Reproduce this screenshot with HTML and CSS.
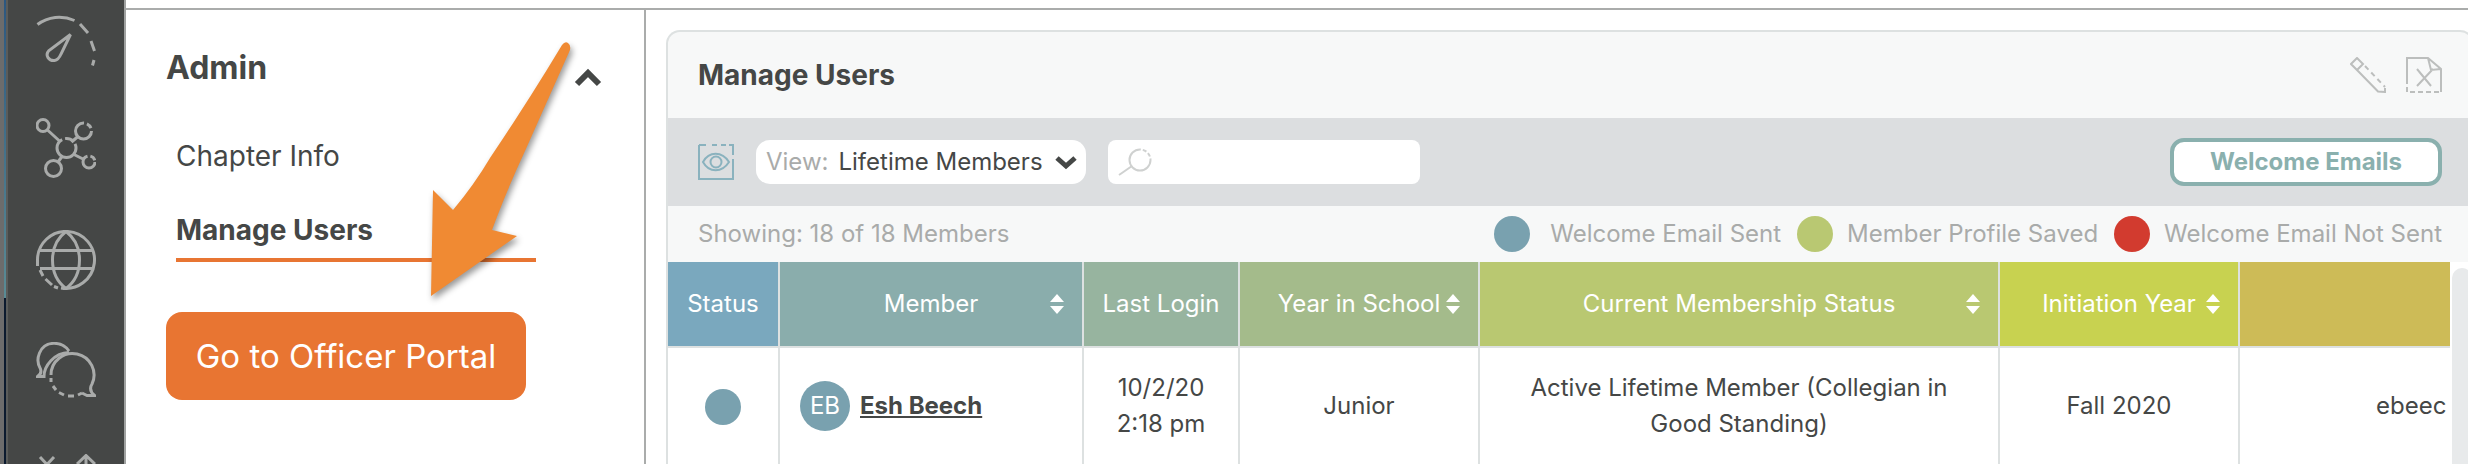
FILE: index.html
```html
<!DOCTYPE html>
<html lang="en">
<head>
    <meta charset="UTF-8">
    <meta name="viewport" content="width=device-width, initial-scale=1.0">
    <title>Manage Users</title>
    <link rel="stylesheet" href="styles.css">
</head>
<body>
    <div class="window-edge"></div>

    <!-- Icon bar -->
    <nav class="icon-bar" aria-label="Main">
        <a href="#" aria-label="Dashboard">
            <svg viewBox="0 0 60 60">
                <path d="M1.500 18.500C12 10.500 26 9 38.500 14.500"/>
                <path d="M44 18L52 27M55 35L58.500 45M58 54L56.500 59.500"/>
                <path d="M34.500 28.500L13 44.500C8.500 49.500 13 55 18.500 54.500C22 54 23.500 51.500 25 48Z"/>
            </svg>
        </a>
        <a href="#" aria-label="Network">
            <svg viewBox="0 0 60 60">
                <circle cx="7" cy="7.500" r="6"/>
                <circle cx="30.500" cy="30" r="9.500" stroke-dasharray="40 3 9 3"/>
                <circle cx="47.500" cy="13" r="8" stroke-dasharray="38 3 6 3"/>
                <circle cx="17.500" cy="50.500" r="8"/>
                <circle cx="53" cy="44" r="6" stroke-dasharray="26 3 6 3"/>
                <path d="M11.500 12L23.500 23M35.500 24L42 18.500M26 38.500L22 44M38 36.500L48 41.500"/>
            </svg>
        </a>
        <a href="#" aria-label="Website">
            <svg viewBox="0 0 60 60">
                <path d="M1.500 30A28.500 28.500 0 1 1 25 58"/>
                <path d="M1.500 30V36M4 40L7 46M9.500 49L16 55M18 56.500L22 58"/>
                <path d="M30 1.500C12 15 12 45 30 58.500C48 45 48 15 30 1.500ZM4 20.500H56M4 38.500H56"/>
            </svg>
        </a>
        <a href="#" aria-label="Messages">
            <svg viewBox="0 0 60 60">
                <path d="M33 9C26-1 9-2 3.500 11C1 17 2 23 4.500 27C5.500 30 4 33 1.500 34.500H8C8 24 18 11 33 10.500"/>
                <path d="M15 33A21.500 21.500 0 1 1 56 42C53.500 46 54.500 50 58.500 53.500H51L46 51"/>
                <path d="M15 36V40M17 44L20 48M23 50.500L28 53M32 54H38M42 53L46 51"/>
            </svg>
        </a>
        <a href="#" aria-label="Transfers">
            <svg viewBox="0 0 60 60">
                <path d="M4 3L18 18M18 3L4 18M50 1.500V30M41 10L50 1.500L59 10"/>
            </svg>
        </a>
    </nav>

    <div class="page">
        <!-- Admin menu -->
        <aside class="side-menu">
            <div class="menu-title">
                <h2>Admin</h2>
                <button class="collapse" type="button" aria-label="Collapse menu">
                    <svg viewBox="0 0 28 20"><path d="M3 16L14 5L25 16"/></svg>
                </button>
            </div>
            <ul>
                <li><a href="#">Chapter Info</a></li>
                <li><a class="active" href="#">Manage Users</a></li>
            </ul>
            <a class="portal-button" href="#">Go to Officer Portal</a>
            <svg class="arrow" viewBox="0 0 140 256" aria-hidden="true">
                <path d="M132 5Q135 1 138 3Q141 5 140 10L95 111Q76 152 62 190L87 196L1 256L3 150L23 170Q44 145 60 118Q99 60 132 5Z"/>
            </svg>
        </aside>

        <!-- Users -->
        <main>
            <section class="card">
                <header class="card-header">
                    <h1>Manage Users</h1>
                    <div class="actions">
                        <button type="button" aria-label="Edit">
                            <svg viewBox="0 0 36 36">
                                <path d="M1 7L7 1L13 7L7 13ZM7 13L28 34.500L35 35V31"/>
                                <path d="M15 9L35 30" stroke-dasharray="5 4"/>
                            </svg>
                        </button>
                        <button type="button" aria-label="Export to Excel">
                            <svg viewBox="0 0 36 36">
                                <path d="M1 27V1H22L35 12V35M22 1L25 13L35 12M11 12L25 29M27 12L11 29"/>
                                <path d="M1 30V35H35" stroke-dasharray="5 3"/>
                            </svg>
                        </button>
                    </div>
                </header>

                <div class="toolbar">
                    <button class="view-button" type="button" aria-label="Show columns">
                        <svg viewBox="0 0 36 36">
                            <path d="M1 1V35H35V15M35 11V2M1 1H8M14 1H19M23 1H28M31 1H36"/>
                            <path d="M5 18C11 7 24 7 31 18C24 29 11 29 5 18Z"/>
                            <circle cx="18" cy="18" r="5.500"/>
                        </svg>
                    </button>
                    <div class="view-select">
                        <label for="view">View:</label>
                        <select id="view">
                            <option>Lifetime Members</option>
                        </select>
                        <svg viewBox="0 0 24 16"><path d="M3 4L12 12L21 4"/></svg>
                    </div>
                    <div class="search">
                        <svg viewBox="0 0 34 28">
                            <circle cx="22" cy="12" r="10.500" stroke-dasharray="50 2 4 2 4 2"/>
                            <path d="M14 18L1 27"/>
                        </svg>
                        <input type="search" aria-label="Search members">
                    </div>
                    <button class="welcome" type="button">Welcome Emails</button>
                </div>

                <div class="summary">
                    <span>Showing: 18 of 18 Members</span>
                    <ul class="legend">
                        <li class="sent"><i class="dot"></i>Welcome Email Sent</li>
                        <li><i class="dot saved"></i>Member Profile Saved</li>
                        <li><i class="dot not-sent"></i>Welcome Email Not Sent</li>
                    </ul>
                </div>

                <div class="table-area">
                    <div class="table-scroll">
                        <table>
                            <colgroup>
                                <col class="col-status">
                                <col class="col-member">
                                <col class="col-login">
                                <col class="col-year">
                                <col class="col-membership">
                                <col class="col-year">
                                <col class="col-email">
                            </colgroup>
                            <thead>
                                <tr>
                                    <th class="status">Status</th>
                                    <th class="member"><div class="sortable">Member <svg viewBox="0 0 14 20"><path d="M7 0L14 8H0ZM0 12H14L7 20Z"/></svg></div></th>
                                    <th class="login">Last Login</th>
                                    <th class="year"><div class="sortable">Year in School <svg viewBox="0 0 14 20"><path d="M7 0L14 8H0ZM0 12H14L7 20Z"/></svg></div></th>
                                    <th class="membership"><div class="sortable">Current Membership Status <svg viewBox="0 0 14 20"><path d="M7 0L14 8H0ZM0 12H14L7 20Z"/></svg></div></th>
                                    <th class="initiation"><div class="sortable">Initiation Year <svg viewBox="0 0 14 20"><path d="M7 0L14 8H0ZM0 12H14L7 20Z"/></svg></div></th>
                                    <th class="email"></th>
                                </tr>
                            </thead>
                            <tbody>
                                <tr>
                                    <td><i class="dot"></i></td>
                                    <td>
                                        <div class="person">
                                            <span class="avatar">EB</span>
                                            <a href="#">Esh Beech</a>
                                        </div>
                                    </td>
                                    <td>10/2/20<br>2:18 pm</td>
                                    <td>Junior</td>
                                    <td>Active Lifetime Member (Collegian in Good Standing)</td>
                                    <td>Fall 2020</td>
                                    <td class="email-cell">ebeec</td>
                                </tr>
                            </tbody>
                        </table>
                    </div>
                    <div class="scrollbar"></div>
                </div>
            </section>
        </main>
    </div>
</body>
</html>
```
FILE: styles.css
```css
* {
    box-sizing: border-box;
}

body {
    margin: 0;
    height: 100vh;
    display: flex;
    overflow: hidden;
    font-family: Inter, "Liberation Sans", sans-serif;
    font-size: 24px;
    line-height: 36px;
    color: #454746;
    background-color: #fff;
}

h1, h2, ul {
    margin: 0;
    padding: 0;
}

ul {
    list-style: none;
}

a {
    color: inherit;
    text-decoration: none;
}

button {
    padding: 0;
    border: none;
    background: none;
    font: inherit;
    cursor: pointer;
}

svg {
    display: block;
    fill: none;
    stroke: currentColor;
}

/* Window edge */
.window-edge {
    flex: none;
    width: 8px;
    border-left: 4px solid #6c6c6c;
    border-right: 2px solid #5a5c5b;
    background: linear-gradient(#2c5780, #5b8c95 298px, #0b1a2e 298px);
}

/* Icon bar */
.icon-bar {
    flex: none;
    width: 118px;
    display: flex;
    flex-direction: column;
    align-items: center;
    gap: 52px;
    padding-top: 6px;
    overflow: hidden;
    background-color: #454746;
    border-right: 2px solid #a0a2a1;
    color: #a9abaa;
}

.icon-bar svg {
    width: 60px;
    height: 60px;
    stroke-width: 3;
}

/* Page */
.page {
    flex: 1;
    min-width: 0;
    display: flex;
    margin-top: 8px;
    border-top: 2px solid #aaacab;
}

/* Admin menu */
.side-menu {
    position: relative;
    flex: none;
    width: 520px;
    padding: 38px 42px 0 40px;
    border-right: 2px solid #aaacab;
}

.menu-title {
    display: flex;
    justify-content: space-between;
    align-items: flex-end;
    height: 40px;
}

.menu-title h2 {
    font-size: 32px;
    line-height: 40px;
}

.collapse svg {
    width: 28px;
    height: 20px;
    color: #454746;
    stroke-width: 6;
}

.side-menu ul {
    width: 370px;
    padding: 44px 0 50px 10px;
    font-size: 28px;
}

.side-menu li a {
    display: block;
    height: 48px;
    line-height: 48px;
}

.side-menu li + li {
    margin-top: 30px;
}

.side-menu .active {
    height: 52px;
    line-height: 40px;
    font-weight: bold;
    border-bottom: 4px solid #e87532;
}

.portal-button {
    display: block;
    width: 360px;
    height: 88px;
    line-height: 88px;
    border-radius: 16px;
    background-color: #e87532;
    color: #fff;
    font-size: 33px;
    text-align: center;
}

.arrow {
    position: absolute;
    top: 30px;
    left: 304px;
    width: 140px;
    height: 256px;
    overflow: visible;
    fill: #f08a33;
    stroke: none;
    filter: drop-shadow(2px 4px 3px rgba(0, 0, 0, 0.4));
}

/* Card */
main {
    flex: 1;
    min-width: 0;
    padding: 20px 0 0 20px;
    margin-right: -6px;
}

.card {
    border: 2px solid #dde1e1;
    border-bottom: none;
    border-radius: 14px 14px 0 0;
    background-color: #f7f8f8;
}

.card-header {
    display: flex;
    justify-content: space-between;
    align-items: center;
    height: 86px;
    padding: 0 30px;
}

.card-header h1 {
    font-size: 28px;
}

.actions {
    display: flex;
    gap: 20px;
}

.actions svg {
    width: 36px;
    height: 36px;
    color: #bcbebd;
    stroke-width: 2;
}

.toolbar {
    display: flex;
    align-items: center;
    height: 88px;
    padding: 0 30px;
    background-color: #dcdee0;
}

.view-button svg {
    width: 36px;
    height: 36px;
    color: #8ab2be;
    stroke-width: 2;
}

.view-select {
    position: relative;
    display: flex;
    align-items: center;
    width: 330px;
    height: 44px;
    margin: 0 22px;
    padding-left: 10px;
    border-radius: 14px;
    background-color: #fff;
}

.view-select label {
    margin-right: 10px;
    color: #a9abaa;
}

.view-select select {
    flex: 1;
    height: 44px;
    padding: 0;
    border: none;
    appearance: none;
    background: none;
    font: inherit;
    color: #454746;
}

.view-select svg {
    position: absolute;
    right: 8px;
    top: 14px;
    width: 24px;
    height: 16px;
    stroke-width: 5;
    pointer-events: none;
}

.search {
    display: flex;
    align-items: center;
    gap: 10px;
    width: 312px;
    height: 44px;
    padding: 0 10px;
    border-radius: 8px;
    background-color: #fff;
}

.search svg {
    width: 34px;
    height: 28px;
    color: #cfd1d0;
    stroke-width: 2;
}

.search input {
    flex: 1;
    min-width: 0;
    border: none;
    outline: none;
    background: none;
    font: inherit;
}

.welcome {
    width: 272px;
    height: 48px;
    margin-left: auto;
    border: 4px solid #8ab0ae;
    border-radius: 14px;
    background-color: #fff;
    color: #8ab0ae;
    font-weight: bold;
}

.summary {
    display: flex;
    justify-content: space-between;
    align-items: center;
    height: 56px;
    padding: 0 30px;
    color: #a9abaa;
}

.legend {
    display: flex;
    gap: 16px;
}

.legend li {
    display: flex;
    align-items: center;
    gap: 14px;
}

.legend .sent {
    gap: 20px;
}

.dot {
    display: inline-block;
    width: 36px;
    height: 36px;
    border-radius: 50%;
    background-color: #79a1af;
    vertical-align: middle;
}

.saved {
    background-color: #b9c872;
}

.not-sent {
    background-color: #d23b2f;
}

/* Table */
.table-area {
    display: flex;
    gap: 2px;
    background-color: #fff;
}

.table-scroll {
    flex: 1;
    min-width: 0;
    overflow: hidden;
}

.scrollbar {
    flex: none;
    width: 20px;
    margin-top: 6px;
    border-radius: 10px 10px 0 0;
    background-color: #e8eaeb;
}

table {
    width: 2180px;
    table-layout: fixed;
    border-collapse: separate;
    border-spacing: 0;
}

.col-status {
    width: 112px;
}

.col-member {
    width: 304px;
}

.col-login {
    width: 156px;
}

.col-year {
    width: 240px;
}

.col-membership {
    width: 520px;
}

th, td {
    padding: 0;
    border-right: 2px solid #dde1e1;
    text-align: center;
}

th {
    height: 86px;
    border-bottom: 2px solid #dde1e1;
    color: #fff;
    font-weight: normal;
}

td {
    height: 116px;
    padding: 0 20px;
}

.status { background-color: #7aa8be; }
.member { background-color: #8aadac; }
.login { background-color: #97b49f; }
.year { background-color: #a4bb8b; }
.membership { background-color: #b9c871; }
.initiation { background-color: #c8d250; }
.email { background-color: #cdbb57; }

.sortable {
    display: grid;
    grid-template-columns: 1fr auto 1fr;
    align-items: center;
    padding: 0 18px;
}

/* keeps the heading in the middle column */
.sortable::before {
    content: "";
}

.sortable svg {
    justify-self: end;
    width: 14px;
    height: 20px;
    fill: #fff;
    stroke: none;
}

.person {
    display: flex;
    align-items: center;
    gap: 10px;
}

.person a {
    font-weight: bold;
    text-decoration: underline;
}

.avatar {
    width: 50px;
    height: 50px;
    border-radius: 50%;
    background-color: #79a1af;
    color: #fff;
    line-height: 50px;
}

.email-cell {
    padding-left: 136px;
    text-align: left;
}
```
